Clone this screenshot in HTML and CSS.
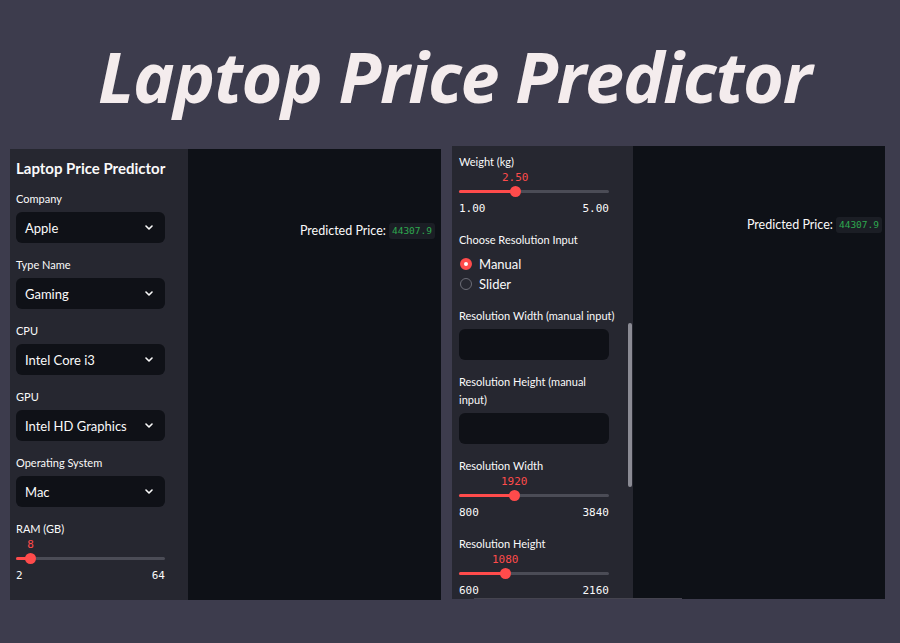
FILE: index.html
```html
<!DOCTYPE html>
<html lang="en">
<head>
<meta charset="utf-8">
<title>Laptop Price Predictor</title>
<link rel="stylesheet" href="styles.css">
</head>
<body>
<header class="header">
  <h1 class="title">Laptop Price Predictor</h1>
</header>
<main class="shots">
  <section class="shot shot-left">
    <aside class="sidebar">
      <h2 class="side-title">Laptop Price Predictor</h2>
      <div class="field">
        <div class="label">Company</div>
        <div class="select"><span>Apple</span><svg class="chev" viewBox="0 0 8 5" width="8" height="5"><polyline points="1,1 4,4 7,1"/></svg></div>
      </div>
      <div class="field">
        <div class="label">Type Name</div>
        <div class="select"><span>Gaming</span><svg class="chev" viewBox="0 0 8 5" width="8" height="5"><polyline points="1,1 4,4 7,1"/></svg></div>
      </div>
      <div class="field">
        <div class="label">CPU</div>
        <div class="select"><span>Intel Core i3</span><svg class="chev" viewBox="0 0 8 5" width="8" height="5"><polyline points="1,1 4,4 7,1"/></svg></div>
      </div>
      <div class="field">
        <div class="label">GPU</div>
        <div class="select"><span>Intel HD Graphics</span><svg class="chev" viewBox="0 0 8 5" width="8" height="5"><polyline points="1,1 4,4 7,1"/></svg></div>
      </div>
      <div class="field">
        <div class="label">Operating System</div>
        <div class="select"><span>Mac</span><svg class="chev" viewBox="0 0 8 5" width="8" height="5"><polyline points="1,1 4,4 7,1"/></svg></div>
      </div>
      <div class="slider">
        <div class="label">RAM (GB)</div>
        <div class="slider-value"><span style="left:9.7%">8</span></div>
        <div class="track"><div class="fill" style="width:9.7%"></div><div class="thumb" style="left:9.7%"></div></div>
        <div class="minmax"><span>2</span><span>64</span></div>
      </div>
    </aside>
    <div class="main main-left">
      <div class="result">Predicted Price: <code class="code">44307.9</code></div>
    </div>
  </section>

  <section class="shot shot-right">
    <aside class="sidebar sidebar-right">
      <div class="slider">
        <div class="label">Weight (kg)</div>
        <div class="slider-value"><span style="left:37.5%">2.50</span></div>
        <div class="track"><div class="fill" style="width:37.5%"></div><div class="thumb" style="left:37.5%"></div></div>
        <div class="minmax"><span>1.00</span><span>5.00</span></div>
      </div>
      <div class="field">
        <div class="label">Choose Resolution Input</div>
        <div class="radios">
          <div class="radio"><span class="dot dot-on"></span>Manual</div>
          <div class="radio"><span class="dot"></span>Slider</div>
        </div>
      </div>
      <div class="field">
        <div class="label">Resolution Width (manual input)</div>
        <div class="input"></div>
      </div>
      <div class="field">
        <div class="label label-wrap">Resolution Height (manual input)</div>
        <div class="input"></div>
      </div>
      <div class="slider">
        <div class="label">Resolution Width</div>
        <div class="slider-value"><span style="left:36.8%">1920</span></div>
        <div class="track"><div class="fill" style="width:36.8%"></div><div class="thumb" style="left:36.8%"></div></div>
        <div class="minmax"><span>800</span><span>3840</span></div>
      </div>
      <div class="slider">
        <div class="label">Resolution Height</div>
        <div class="slider-value"><span style="left:30.8%">1080</span></div>
        <div class="track"><div class="fill" style="width:30.8%"></div><div class="thumb" style="left:30.8%"></div></div>
        <div class="minmax"><span>600</span><span>2160</span></div>
      </div>
      <div class="vscroll"></div>
    </aside>
    <div class="main main-right">
      <div class="result">Predicted Price: <code class="code">44307.9</code></div>
    </div>
    <div class="hscroll"></div>
  </section>
</main>
</body>
</html>
```

FILE: styles.css
```css
* { box-sizing: border-box; }

html, body {
  margin: 0;
  padding: 0;
}

body {
  width: 900px;
  height: 643px;
  overflow: hidden;
  background: #3d3c4d;
  font-family: Lato, "Noto Sans", sans-serif;
  color: #fafafa;
}

.header {
  padding-top: 41px;
  height: 146px;
}

.title {
  margin: 0;
  font-family: "Open Sans", sans-serif;
  font-weight: 700;
  font-style: italic;
  font-size: 70px;
  line-height: 70px;
  letter-spacing: -1.2px;
  text-align: center;
  color: #f4eced;
  padding-left: 9px;
}

.shots {
  display: flex;
  align-items: flex-start;
  gap: 11px;
  padding-left: 10px;
}

.shot {
  display: grid;
  overflow: hidden;
  position: relative;
}

.shot-left {
  grid-template-columns: 178px 253px;
  height: 451px;
  margin-top: 3px;
}

.shot-right {
  grid-template-columns: 181px 252px;
  height: 453px;
}

.sidebar {
  background: #262730;
  padding: 10px 23px 0 6px;
  display: flex;
  flex-direction: column;
  gap: 13px;
  position: relative;
}

.sidebar-right {
  padding: 7px 24px 0 7px;
}

.side-title {
  margin: 0;
  font-size: 15px;
  line-height: 18px;
  font-weight: 700;
  white-space: nowrap;
}

.field {
  display: flex;
  flex-direction: column;
  gap: 4px;
}

.label {
  font-size: 11px;
  line-height: 18px;
  font-weight: 400;
  white-space: nowrap;
}

.label-wrap {
  white-space: normal;
  width: 140px;
}

.select {
  height: 31px;
  border-radius: 6px;
  background: #0f1117;
  display: flex;
  align-items: center;
  justify-content: space-between;
  padding: 0 12px 0 9px;
  font-size: 13px;
}

.chev polyline {
  fill: none;
  stroke: #fafafa;
  stroke-width: 1.6;
  stroke-linecap: round;
  stroke-linejoin: round;
}

.input {
  height: 31px;
  border-radius: 6px;
  background: #0f1117;
}

.slider {
  display: flex;
  flex-direction: column;
  margin-bottom: 2px;
}

.slider-value {
  position: relative;
  height: 14px;
}

.slider-value span {
  position: absolute;
  top: 0;
  transform: translateX(-50%);
  font-family: "DejaVu Sans Mono", monospace;
  font-size: 11px;
  line-height: 14px;
  color: #ff4b4b;
}

.track {
  position: relative;
  height: 10px;
  margin-top: 1px;
}

.track::before {
  content: "";
  position: absolute;
  left: 0;
  right: 0;
  top: 4px;
  height: 3px;
  border-radius: 2px;
  background: #4b4c56;
}

.fill {
  position: absolute;
  left: 0;
  top: 4px;
  height: 3px;
  border-radius: 2px;
  background: #ff4b4b;
}

.thumb {
  position: absolute;
  top: 0;
  width: 11px;
  height: 11px;
  margin-left: -5.5px;
  border-radius: 50%;
  background: #ff4b4b;
}

.minmax {
  display: flex;
  justify-content: space-between;
  margin-top: 6px;
  font-family: "DejaVu Sans Mono", monospace;
  font-size: 11px;
  line-height: 14px;
  color: #fafafa;
}

.radios {
  display: flex;
  flex-direction: column;
  margin-top: 1px;
}

.radio {
  height: 20px;
  display: flex;
  align-items: center;
  gap: 7px;
  font-size: 13px;
  padding-left: 1px;
}

.dot {
  width: 12px;
  height: 12px;
  border-radius: 50%;
  border: 1px solid #6c6d77;
}

.dot-on {
  border: 4px solid #ff4b4b;
  background: #ffffff;
}

.vscroll {
  position: absolute;
  right: 1px;
  top: 177px;
  width: 4px;
  height: 164px;
  border-radius: 2px;
  background: #8b8b94;
}

.hscroll {
  position: absolute;
  left: 22px;
  bottom: 0;
  width: 208px;
  height: 1px;
  background: #45444f;
}

.main {
  background: #0e1117;
  display: flex;
  flex-direction: column;
  align-items: flex-end;
  padding-right: 6px;
}

.main-left { padding-top: 74px; }
.main-right { padding-top: 71px; padding-right: 3px; }

.result {
  font-size: 12.5px;
  line-height: 16px;
  display: flex;
  align-items: center;
  gap: 3px;
  white-space: nowrap;
}

.code {
  font-family: "DejaVu Sans Mono", monospace;
  font-size: 9.5px;
  line-height: 12px;
  padding: 2px 3px;
  border-radius: 3px;
  background: #1b1e25;
  color: #2ea84f;
}
```
